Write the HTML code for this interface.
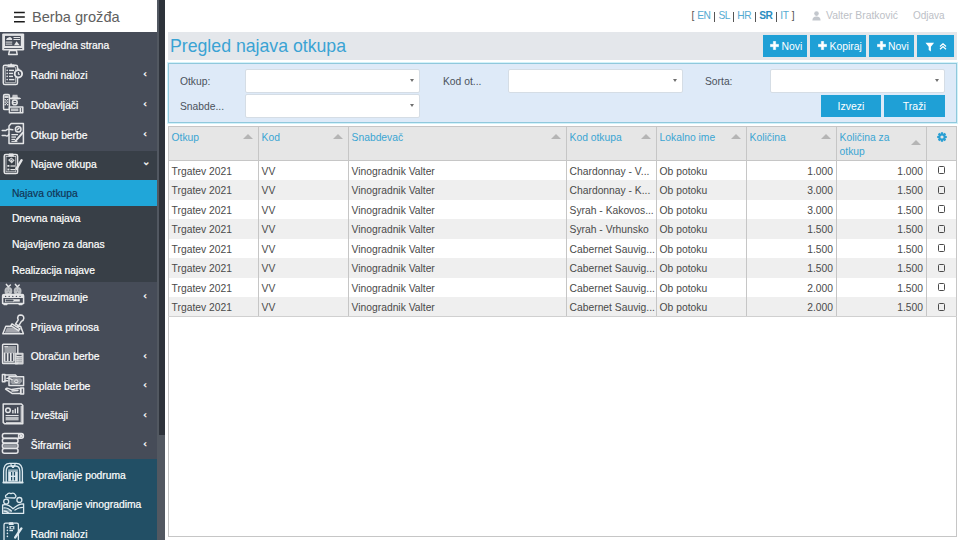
<!DOCTYPE html>
<html><head><meta charset="utf-8">
<style>
*{box-sizing:border-box;margin:0;padding:0}
html,body{width:960px;height:540px;overflow:hidden;background:#fff;font-family:"Liberation Sans",sans-serif;}
.abs{position:absolute}
#side{position:absolute;left:0;top:0;width:159px;height:540px;background:#464c58;}
#brand{position:absolute;left:0;top:0;width:157px;height:32px;background:#fff;}
#brand .t{position:absolute;left:32px;top:8.5px;font-size:14.6px;color:#606060;white-space:nowrap}
.hb{position:absolute;left:14px;width:11px;height:1.6px;background:#1a1a1a}
.mi{position:absolute;left:0;width:158px;color:#fff;-webkit-text-stroke:0.2px #fff;font-size:10.3px;white-space:nowrap}
.mi .tx{position:absolute;left:30.8px}
.mi .ch{position:absolute;left:143.5px;top:-1.6px;font-size:9.5px;color:#fff;-webkit-text-stroke:0.35px #fff}
.si{position:absolute;left:0;width:158px;color:#fff;-webkit-text-stroke:0.2px #fff;font-size:10.3px;white-space:nowrap}
.si .tx{position:absolute;left:11.9px}
#sb{position:absolute;left:157px;top:0;width:8px;height:540px;background:#525861}
#sbt{position:absolute;left:159px;top:0;width:5.8px;height:435px;background:#2e333b}
/* top bar */
#lang{position:absolute;left:691px;top:9.5px;font-size:9.8px;color:#555;white-space:nowrap}
#lang a{color:#3fa3cf;text-decoration:none}
#lang b{color:#1f8fc3}
#user{position:absolute;left:826px;top:9.8px;font-size:10.4px;color:#bcc0c6;white-space:nowrap}
#logout{position:absolute;left:913px;top:9.8px;font-size:10px;color:#bcc0c6;white-space:nowrap}
#titlebar{position:absolute;left:168px;top:32px;width:789px;height:28px;background:#e4e7eb}
#title{position:absolute;left:170px;top:36px;font-size:17.7px;color:#3aa3d4;white-space:nowrap}
.btn{position:absolute;top:35px;height:22px;background:#1fa0d6;color:#fff;font-size:10.5px;white-space:nowrap;text-align:center;line-height:22px}
#filter{position:absolute;left:168px;top:63px;width:789px;height:60px;background:#deeaf8;border:1px solid #90c8dc;box-shadow:0 0 0 1px #d2f2fa}
.lbl{position:absolute;font-size:10.3px;color:#4b525c;white-space:nowrap}
.inp{position:absolute;height:23px;background:#fff;border:1px solid #d5dde5;border-radius:2px}
.inp i{position:absolute;right:5px;top:9px;width:0;height:0;border-left:2.5px solid transparent;border-right:2.5px solid transparent;border-top:3.5px solid #707070}
.fbtn{position:absolute;top:95px;height:22px;background:#1fa0d6;color:#fff;font-size:10.5px;text-align:center;line-height:22px}
/* table */
#grid{position:absolute;left:168px;top:126px;width:789px;height:411px;border:1px solid #c6c6c6;background:#fff}
table{position:absolute;left:168px;top:126px;border-collapse:collapse;table-layout:fixed;font-size:10.3px;color:#333}
th{background:#e6e6e6;height:34px;vertical-align:top;text-align:left;font-weight:normal;color:#3aa5d3;padding:3px 3px 0 3px;border:1px solid #c6c6c6;position:relative;line-height:13px}
td{height:19.5px;padding:0 3px;border-left:1px solid #c6c6c6;border-right:1px solid #c6c6c6;white-space:nowrap;overflow:hidden;line-height:19px}
tr.alt td{background:#efefef}
td.r{text-align:right}
.arr{position:absolute;right:7px;top:7px;width:0;height:0;border-left:5px solid transparent;border-right:5px solid transparent;border-bottom:5px solid #b5b5b5}

.hd{position:absolute;font-size:10.3px;color:#3aa5d3;white-space:nowrap;line-height:14px}
.arr{position:absolute;width:0;height:0;border-left:5px solid transparent;border-right:5px solid transparent;border-bottom:5px solid #b5b5b5}
.cell{position:absolute;font-size:10.3px;color:#4a4a4a;white-space:nowrap;height:19.5px;line-height:21.5px}
.cell.r{text-align:right}
.tab{position:absolute;width:7px;height:8px;border:1px solid #4a4a4a;border-bottom-width:1.8px;border-radius:1.5px}
.btxt{position:absolute;top:40.3px;font-size:10.4px;color:#fff;white-space:nowrap;line-height:13px}
.lg{position:absolute;top:10.4px;font-size:10.2px;line-height:12px;white-space:nowrap}
.lg.a{color:#55abd2;letter-spacing:-0.5px}
.lg.b{color:#2a8dc0;font-weight:bold;letter-spacing:-0.6px}
.lg.p{background:#555;width:1.1px;height:10px;top:11.5px}
.lg.br{color:#555}
</style></head><body>
<div id="side">
  <div id="brand">
    <svg class="abs" style="left:0;top:0" width="30" height="30" viewBox="0 0 30 30"><path d="M14 12.6h10.8M14 17.1h10.8M14 21.7h10.8" stroke="#1a1a1a" stroke-width="1.5"/></svg>
    <div class="t">Berba grožđa</div>
  </div>
<div class="abs" style="left:0;top:151px;width:158px;height:131.4px;background:#383f47"></div>
<div class="abs" style="left:0;top:179.6px;width:158px;height:26.2px;background:#20a6d9"></div>
<div class="abs" style="left:0;top:459.4px;width:158px;height:81px;background:#224f65"></div>
<div class="mi" style="top:31.3px;height:29.75px;line-height:29.75px"><span class="ic"></span><span class="tx">Pregledna strana</span></div>
<div class="mi" style="top:60.9px;height:29.75px;line-height:29.75px"><span class="ic"></span><span class="tx">Radni nalozi</span><span class="ch">‹</span></div>
<div class="mi" style="top:90.5px;height:29.75px;line-height:29.75px"><span class="ic"></span><span class="tx">Dobavljači</span><span class="ch">‹</span></div>
<div class="mi" style="top:120.5px;height:29.75px;line-height:29.75px"><span class="ic"></span><span class="tx">Otkup berbe</span><span class="ch">‹</span></div>
<div class="mi" style="top:151px;height:28.6px;line-height:28.6px"><span class="ic"></span><span class="tx">Najave otkupa</span><span class="ch" style="left:141.8px;top:-2.6px">⌄</span></div>
<div class="si" style="top:179.6px;height:25.7px;line-height:28px"><span class="tx" style="color:#123556;-webkit-text-stroke:0.2px #123556">Najava otkupa</span></div>
<div class="si" style="top:205.29999999999998px;height:25.7px;line-height:28px"><span class="tx">Dnevna najava</span></div>
<div class="si" style="top:231.0px;height:25.7px;line-height:28px"><span class="tx">Najavljeno za danas</span></div>
<div class="si" style="top:256.7px;height:25.7px;line-height:28px"><span class="tx">Realizacija najave</span></div>
<div class="mi" style="top:283.0px;height:29.6px;line-height:29.6px"><span class="ic"></span><span class="tx">Preuzimanje</span><span class="ch">‹</span></div>
<div class="mi" style="top:312.6px;height:29.6px;line-height:29.6px"><span class="ic"></span><span class="tx">Prijava prinosa</span></div>
<div class="mi" style="top:342.2px;height:29.6px;line-height:29.6px"><span class="ic"></span><span class="tx">Obračun berbe</span><span class="ch">‹</span></div>
<div class="mi" style="top:371.8px;height:29.6px;line-height:29.6px"><span class="ic"></span><span class="tx">Isplate berbe</span><span class="ch">‹</span></div>
<div class="mi" style="top:401.4px;height:29.6px;line-height:29.6px"><span class="ic"></span><span class="tx">Izveštaji</span><span class="ch">‹</span></div>
<div class="mi" style="top:431.0px;height:29.6px;line-height:29.6px"><span class="ic"></span><span class="tx">Šifrarnici</span><span class="ch">‹</span></div>
<div class="mi" style="top:460.6px;height:29.6px;line-height:29.6px"><span class="ic"></span><span class="tx">Upravljanje podruma</span></div>
<div class="mi" style="top:490.35px;height:29.6px;line-height:29.6px"><span class="ic"></span><span class="tx">Upravljanje vinogradima</span></div>
<div class="mi" style="top:520.1px;height:29.6px;line-height:29.6px"><span class="ic"></span><span class="tx">Radni nalozi</span></div>
</div>
<div id="sb"></div><div id="sbt"></div>

<span class="lg br" style="left:691.5px">[</span><span class="lg a" style="left:697.3px">EN</span><span class="lg p" style="left:714.4000000000001px"></span><span class="lg a" style="left:718.4px">SL</span><span class="lg p" style="left:733.0px"></span><span class="lg a" style="left:737.3px">HR</span><span class="lg p" style="left:754.9000000000001px"></span><span class="lg b" style="left:759.3px">SR</span><span class="lg p" style="left:776.2px"></span><span class="lg a" style="left:780.3px">IT</span><span class="lg br" style="left:791.8px">]</span>
<svg class="abs" style="left:812px;top:11px" width="9" height="10" viewBox="0 0 9 10"><circle cx="4.5" cy="2.6" r="2.3" fill="#c3c7cd"/><path d="M0.4 9.6 Q0.4 5.4 4.5 5.4 Q8.6 5.4 8.6 9.6 Z" fill="#c3c7cd"/></svg>
<div id="user">Valter Bratković</div>
<div id="logout">Odjava</div>

<div id="titlebar"></div>
<div id="title">Pregled najava otkupa</div>
<div class="btn" style="left:763px;width:44px"></div>
<div class="btn" style="left:810px;width:56px"></div>
<div class="btn" style="left:869px;width:45px"></div>
<div class="btn" style="left:917px;width:37px"></div>
<svg class="abs" style="left:770px;top:40.5px" width="9" height="9" viewBox="0 0 9 9"><path d="M3.3 0.3h2.4v3h3v2.4h-3v3h-2.4v-3h-3v-2.4h3z" fill="#fff" stroke="#fff" stroke-width="0.4" stroke-linejoin="round"/></svg><div class="btxt" style="left:781.5px">Novi</div>
<svg class="abs" style="left:818px;top:40.5px" width="9" height="9" viewBox="0 0 9 9"><path d="M3.3 0.3h2.4v3h3v2.4h-3v3h-2.4v-3h-3v-2.4h3z" fill="#fff" stroke="#fff" stroke-width="0.4" stroke-linejoin="round"/></svg><div class="btxt" style="left:829.5px">Kopiraj</div>
<svg class="abs" style="left:876.5px;top:40.5px" width="9" height="9" viewBox="0 0 9 9"><path d="M3.3 0.3h2.4v3h3v2.4h-3v3h-2.4v-3h-3v-2.4h3z" fill="#fff" stroke="#fff" stroke-width="0.4" stroke-linejoin="round"/></svg><div class="btxt" style="left:888px">Novi</div>
<svg class="abs" style="left:924.5px;top:41.5px" width="10" height="10" viewBox="0 0 10 10"><path d="M0.5 0.8h8.6l-3.2 4v4.6l-2.2-1.4v-3.2z" fill="#fff"/></svg>
<svg class="abs" style="left:939px;top:42.5px" width="8" height="7" viewBox="0 0 8 7"><path d="M1 3.4l3-2.6l3 2.6M1 6.2l3-2.6l3 2.6" fill="none" stroke="#fff" stroke-width="1.3"/></svg>

<div id="filter"></div>
<div class="lbl" style="left:180px;top:75.8px">Otkup:</div>
<div class="lbl" style="left:180px;top:101px">Snabde...</div>
<div class="lbl" style="left:443px;top:75.8px">Kod ot...</div>
<div class="lbl" style="left:705px;top:75.8px">Sorta:</div>
<div class="inp" style="left:245px;top:69px;width:175px;height:24px"><i></i></div>
<div class="inp" style="left:245px;top:94px;width:175px;height:24px"><i></i></div>
<div class="inp" style="left:508px;top:69px;width:175px;height:24px"><i></i></div>
<div class="inp" style="left:770px;top:69px;width:175px;height:24px"><i></i></div>
<div class="fbtn" style="left:821px;width:60px">Izvezi</div>
<div class="fbtn" style="left:884px;width:60.5px">Traži</div>

<div id="grid"></div>
<div class="abs" style="left:169px;top:127px;width:787px;height:33px;background:#e6e6e6"></div>
<div class="abs" style="left:168px;top:160px;width:789px;height:1px;background:#c6c6c6"></div>
<div class="abs" style="left:169px;top:180.0px;width:787px;height:19.5px;background:#efefef"></div>
<div class="abs" style="left:169px;top:219.0px;width:787px;height:19.5px;background:#efefef"></div>
<div class="abs" style="left:169px;top:258.0px;width:787px;height:19.5px;background:#efefef"></div>
<div class="abs" style="left:169px;top:297.0px;width:787px;height:19.5px;background:#efefef"></div>
<div class="abs" style="left:168px;top:316px;width:789px;height:1px;background:#d0d0d0"></div>
<div class="abs" style="left:258.0px;top:126px;width:1px;height:190px;background:#c6c6c6"></div>
<div class="abs" style="left:348.0px;top:126px;width:1px;height:190px;background:#c6c6c6"></div>
<div class="abs" style="left:566.0px;top:126px;width:1px;height:190px;background:#c6c6c6"></div>
<div class="abs" style="left:656.0px;top:126px;width:1px;height:190px;background:#c6c6c6"></div>
<div class="abs" style="left:746.0px;top:126px;width:1px;height:190px;background:#c6c6c6"></div>
<div class="abs" style="left:836.0px;top:126px;width:1px;height:190px;background:#c6c6c6"></div>
<div class="abs" style="left:926.0px;top:126px;width:1px;height:190px;background:#c6c6c6"></div>
<div class="hd" style="left:171.6px;top:131px">Otkup</div>
<div class="arr" style="left:242.5px;top:134px"></div>
<div class="hd" style="left:261.6px;top:131px">Kod</div>
<div class="arr" style="left:332.5px;top:134px"></div>
<div class="hd" style="left:351.6px;top:131px">Snabdevač</div>
<div class="arr" style="left:550.5px;top:134px"></div>
<div class="hd" style="left:569.6px;top:131px">Kod otkupa</div>
<div class="arr" style="left:640.5px;top:134px"></div>
<div class="hd" style="left:659.6px;top:131px">Lokalno ime</div>
<div class="arr" style="left:730.5px;top:134px"></div>
<div class="hd" style="left:749.6px;top:131px">Količina</div>
<div class="arr" style="left:820.5px;top:134px"></div>
<div class="hd" style="left:839.6px;top:131px">Količina za<br>otkup</div>
<div class="arr" style="left:910.5px;top:140px"></div>
<div class="cell" style="left:171.6px;top:160.5px">Trgatev 2021</div>
<div class="cell" style="left:261.6px;top:160.5px">VV</div>
<div class="cell" style="left:351.6px;top:160.5px">Vinogradnik Valter</div>
<div class="cell" style="left:569.6px;top:160.5px">Chardonnay - V...</div>
<div class="cell" style="left:659.6px;top:160.5px">Ob potoku</div>
<div class="cell r" style="left:746.5px;width:86.5px;top:160.5px">1.000</div>
<div class="cell r" style="left:836.5px;width:86.5px;top:160.5px">1.000</div>
<div class="tab" style="left:938px;top:166.0px"></div>
<div class="cell" style="left:171.6px;top:180.0px">Trgatev 2021</div>
<div class="cell" style="left:261.6px;top:180.0px">VV</div>
<div class="cell" style="left:351.6px;top:180.0px">Vinogradnik Valter</div>
<div class="cell" style="left:569.6px;top:180.0px">Chardonnay - K...</div>
<div class="cell" style="left:659.6px;top:180.0px">Ob potoku</div>
<div class="cell r" style="left:746.5px;width:86.5px;top:180.0px">3.000</div>
<div class="cell r" style="left:836.5px;width:86.5px;top:180.0px">1.500</div>
<div class="tab" style="left:938px;top:185.5px"></div>
<div class="cell" style="left:171.6px;top:199.5px">Trgatev 2021</div>
<div class="cell" style="left:261.6px;top:199.5px">VV</div>
<div class="cell" style="left:351.6px;top:199.5px">Vinogradnik Valter</div>
<div class="cell" style="left:569.6px;top:199.5px">Syrah - Kakovos...</div>
<div class="cell" style="left:659.6px;top:199.5px">Ob potoku</div>
<div class="cell r" style="left:746.5px;width:86.5px;top:199.5px">3.000</div>
<div class="cell r" style="left:836.5px;width:86.5px;top:199.5px">1.500</div>
<div class="tab" style="left:938px;top:205.0px"></div>
<div class="cell" style="left:171.6px;top:219.0px">Trgatev 2021</div>
<div class="cell" style="left:261.6px;top:219.0px">VV</div>
<div class="cell" style="left:351.6px;top:219.0px">Vinogradnik Valter</div>
<div class="cell" style="left:569.6px;top:219.0px">Syrah - Vrhunsko</div>
<div class="cell" style="left:659.6px;top:219.0px">Ob potoku</div>
<div class="cell r" style="left:746.5px;width:86.5px;top:219.0px">1.500</div>
<div class="cell r" style="left:836.5px;width:86.5px;top:219.0px">1.500</div>
<div class="tab" style="left:938px;top:224.5px"></div>
<div class="cell" style="left:171.6px;top:238.5px">Trgatev 2021</div>
<div class="cell" style="left:261.6px;top:238.5px">VV</div>
<div class="cell" style="left:351.6px;top:238.5px">Vinogradnik Valter</div>
<div class="cell" style="left:569.6px;top:238.5px">Cabernet Sauvig...</div>
<div class="cell" style="left:659.6px;top:238.5px">Ob potoku</div>
<div class="cell r" style="left:746.5px;width:86.5px;top:238.5px">1.500</div>
<div class="cell r" style="left:836.5px;width:86.5px;top:238.5px">1.500</div>
<div class="tab" style="left:938px;top:244.0px"></div>
<div class="cell" style="left:171.6px;top:258.0px">Trgatev 2021</div>
<div class="cell" style="left:261.6px;top:258.0px">VV</div>
<div class="cell" style="left:351.6px;top:258.0px">Vinogradnik Valter</div>
<div class="cell" style="left:569.6px;top:258.0px">Cabernet Sauvig...</div>
<div class="cell" style="left:659.6px;top:258.0px">Ob potoku</div>
<div class="cell r" style="left:746.5px;width:86.5px;top:258.0px">1.500</div>
<div class="cell r" style="left:836.5px;width:86.5px;top:258.0px">1.500</div>
<div class="tab" style="left:938px;top:263.5px"></div>
<div class="cell" style="left:171.6px;top:277.5px">Trgatev 2021</div>
<div class="cell" style="left:261.6px;top:277.5px">VV</div>
<div class="cell" style="left:351.6px;top:277.5px">Vinogradnik Valter</div>
<div class="cell" style="left:569.6px;top:277.5px">Cabernet Sauvig...</div>
<div class="cell" style="left:659.6px;top:277.5px">Ob potoku</div>
<div class="cell r" style="left:746.5px;width:86.5px;top:277.5px">2.000</div>
<div class="cell r" style="left:836.5px;width:86.5px;top:277.5px">1.500</div>
<div class="tab" style="left:938px;top:283.0px"></div>
<div class="cell" style="left:171.6px;top:297.0px">Trgatev 2021</div>
<div class="cell" style="left:261.6px;top:297.0px">VV</div>
<div class="cell" style="left:351.6px;top:297.0px">Vinogradnik Valter</div>
<div class="cell" style="left:569.6px;top:297.0px">Cabernet Sauvig...</div>
<div class="cell" style="left:659.6px;top:297.0px">Ob potoku</div>
<div class="cell r" style="left:746.5px;width:86.5px;top:297.0px">2.000</div>
<div class="cell r" style="left:836.5px;width:86.5px;top:297.0px">1.500</div>
<div class="tab" style="left:938px;top:302.5px"></div>
<svg class="abs" style="left:936.5px;top:132px" width="10" height="10" viewBox="0 0 10 10"><path fill-rule="evenodd" d="M8.37 3.73 L9.78 3.93 L9.78 6.07 L8.37 6.27 L8.28 6.49 L9.14 7.63 L7.63 9.14 L6.49 8.28 L6.27 8.37 L6.07 9.78 L3.93 9.78 L3.73 8.37 L3.51 8.28 L2.37 9.14 L0.86 7.63 L1.72 6.49 L1.63 6.27 L0.22 6.07 L0.22 3.93 L1.63 3.73 L1.72 3.51 L0.86 2.37 L2.37 0.86 L3.51 1.72 L3.73 1.63 L3.93 0.22 L6.07 0.22 L6.27 1.63 L6.49 1.72 L7.63 0.86 L9.14 2.37 L8.28 3.51 Z M5 3.4 A1.6 1.6 0 1 0 5 6.6 A1.6 1.6 0 1 0 5 3.4 Z" fill="#2a9fd3"/></svg>
<svg class="abs" style="left:0;top:32px" width="28" height="30" viewBox="0 0 28 30">
<rect x="2.2" y="1.4" width="22" height="17" rx="1.2" fill="#e4e5e7"/>
<rect x="5" y="3.9" width="15.8" height="10" fill="#464c58"/>
<rect x="4.2" y="16" width="18" height="0.9" fill="#464c58"/>
<path d="M9.5 18.6 L16.5 18.6 L17.2 22.6 L8.6 22.6 Z" fill="none" stroke="#e4e5e7" stroke-width="1.5" stroke-linejoin="round" stroke-linecap="round"/>
<path d="M6 8 q0.5-2.5 2.5-2.5 q1.5 -1 3 0.5 q1.2 1 0.5 2 Z" fill="#e4e5e7"/>
<rect x="5.6" y="9.6" width="6.6" height="1" fill="#e4e5e7"/>
<rect x="5.6" y="11.6" width="6.6" height="1" fill="#e4e5e7"/>
<rect x="13.5" y="5" width="6.5" height="1" fill="#e4e5e7"/>
<rect x="13.5" y="7" width="6.5" height="1" fill="#e4e5e7"/>
<path d="M14 13.2 L16.5 9.3 L19.8 13.2 Z" fill="#e4e5e7"/>
</svg>
<svg class="abs" style="left:0;top:60px" width="28" height="30" viewBox="0 0 28 30">
<rect x="3.3" y="5.2" width="14.2" height="19.3" rx="1.6" fill="none" stroke="#e4e5e7" stroke-width="1.5" stroke-linejoin="round" stroke-linecap="round"/>
<rect x="5.2" y="7" width="10.4" height="15.7" rx="0.6" fill="none" stroke="#e4e5e7" stroke-width="0.7"/>
<path d="M7.4 7 L8 4.4 L10 4.4 L10.5 3.4 L11.7 3.4 L12.2 4.4 L14.2 4.4 L14.8 7 Z" fill="#e4e5e7"/>
<g fill="#e4e5e7"><circle cx="7.2" cy="10.4" r="0.8"/><circle cx="7.2" cy="13.4" r="0.8"/><circle cx="7.2" cy="16.4" r="0.8"/><circle cx="7.2" cy="19.6" r="0.8"/>
<rect x="9" y="9.7" width="5" height="1.4"/><rect x="9" y="12.7" width="4" height="1.4"/><rect x="9" y="15.7" width="4" height="1.4"/><rect x="9" y="18.9" width="5.4" height="1.4"/></g>
<circle cx="18.4" cy="13.8" r="3.7" fill="#464c58" stroke="#e4e5e7" stroke-width="1.9"/>
<path d="M18.4 12 L18.4 14.2 L20 14.2" fill="none" stroke="#e4e5e7" stroke-width="1.1"/>
<rect x="17.5" y="8.4" width="1.8" height="1.6" fill="#e4e5e7"/>
</svg>
<svg class="abs" style="left:0;top:90px" width="28" height="30" viewBox="0 0 28 30">
<rect x="3.6" y="4.6" width="5.8" height="15" rx="1.2" fill="none" stroke="#e4e5e7" stroke-width="1.5" stroke-linejoin="round" stroke-linecap="round"/>
<g fill="#e4e5e7"><rect x="4.4" y="5.6" width="4.2" height="2.4" opacity="0.9"/><rect x="4.6" y="9" width="1.3" height="1.3"/><rect x="6.9" y="9" width="1.3" height="1.3"/><rect x="5.7" y="10.3" width="1.2" height="1.2"/><rect x="4.6" y="11.5" width="1.3" height="1.3"/><rect x="6.9" y="11.5" width="1.3" height="1.3"/><rect x="5.7" y="12.8" width="1.2" height="1.2"/><rect x="4.6" y="14" width="1.3" height="1.3"/><rect x="6.9" y="14" width="1.3" height="1.3"/></g>
<path d="M12 8 L12.6 4.8 L17.4 4.8 L18 8" fill="#e4e5e7" opacity="0.8"/>
<ellipse cx="15" cy="8.4" rx="6" ry="1.2" fill="#e4e5e7"/>
<circle cx="14.8" cy="12.4" r="2.4" fill="none" stroke="#e4e5e7" stroke-width="1.5" stroke-linejoin="round" stroke-linecap="round"/>
<path d="M13 12.6 L16.6 12.6" stroke="#e4e5e7" stroke-width="1"/>
<path d="M9.4 17 L22.8 17 L22.8 22.8 L9.4 22.8 Z" fill="none" stroke="#e4e5e7" stroke-width="1.5" stroke-linejoin="round" stroke-linecap="round"/>
<rect x="11" y="18.4" width="7.4" height="2.8" fill="#e4e5e7" opacity="0.75"/>
<rect x="19.6" y="18" width="1.6" height="4" fill="#e4e5e7"/>
</svg>
<svg class="abs" style="left:0;top:120px" width="28" height="30" viewBox="0 0 28 30">
<path d="M11.2 3.6 L23.4 3.6 L23.4 23.6 L9 23.6 L9 6 Z" fill="none" stroke="#e4e5e7" stroke-width="1.5" stroke-linejoin="round" stroke-linecap="round"/>
<circle cx="18.2" cy="9.2" r="2.8" fill="none" stroke="#e4e5e7" stroke-width="1.5" stroke-linejoin="round" stroke-linecap="round"/>
<path d="M17.2 9.8 L19 8.2" fill="none" stroke="#e4e5e7" stroke-width="1.5" stroke-linejoin="round" stroke-linecap="round" stroke-width="1.1"/>
<g fill="#e4e5e7"><rect x="11.4" y="14" width="6.6" height="1.3"/><rect x="11.4" y="16.4" width="4.6" height="1.3"/><rect x="11.4" y="18.8" width="3.6" height="1.3"/><rect x="11.4" y="21" width="6" height="0.9"/></g>
<path d="M22.6 12.8 L15.6 20.8" stroke="#e4e5e7" stroke-width="2" stroke-linecap="round"/>
<path d="M2.2 10.4 L5.8 10.4 Q7.5 8.6 12.8 9.8" fill="none" stroke="#e4e5e7" stroke-width="1.5" stroke-linejoin="round" stroke-linecap="round"/>
<path d="M2.2 15.6 L5.6 15.6 Q7.8 16.8 8.8 14.2" fill="none" stroke="#e4e5e7" stroke-width="1.5" stroke-linejoin="round" stroke-linecap="round"/>
</svg>
<svg class="abs" style="left:0;top:150px" width="28" height="30" viewBox="0 0 28 30">
<rect x="4.2" y="4.6" width="13.4" height="19" rx="1.6" fill="none" stroke="#e4e5e7" stroke-width="1.5" stroke-linejoin="round" stroke-linecap="round"/>
<rect x="6" y="6.4" width="9.8" height="15.4" fill="none" stroke="#e4e5e7" stroke-width="0.7"/>
<path d="M8.2 6.4 L9 3.4 L13.2 3.4 L14 6.4 Z" fill="#e4e5e7"/>
<path d="M8 10 L11.4 7.4 L14.6 10.2 L11.8 13.6 Z" fill="#e4e5e7" opacity="0.9"/>
<path d="M10 10.2 L11.6 9.2 L12.6 10.6" stroke="#464c58" stroke-width="0.8" fill="none"/>
<g fill="#e4e5e7"><rect x="7.4" y="15" width="2" height="1.8"/><rect x="7.4" y="18.6" width="2" height="1.8"/><rect x="10.4" y="15.4" width="4.6" height="1.2"/><rect x="10.4" y="19" width="4.6" height="1.2"/></g>
<path d="M21.6 10.2 L16.4 18.8" stroke="#e4e5e7" stroke-width="2.4" stroke-linecap="round"/>
</svg>
<svg class="abs" style="left:0;top:282px" width="28" height="30" viewBox="0 0 28 30">
<ellipse cx="8.4" cy="9" rx="3.9" ry="4" fill="#e4e5e7" opacity="0.75"/>
<ellipse cx="17.6" cy="9" rx="3.9" ry="4" fill="#e4e5e7" opacity="0.75"/>
<g fill="#464c58" opacity="0.5"><circle cx="7" cy="8" r="0.6"/><circle cx="9.6" cy="8" r="0.6"/><circle cx="8.3" cy="10.4" r="0.6"/><circle cx="16.2" cy="8" r="0.6"/><circle cx="18.8" cy="8" r="0.6"/><circle cx="17.5" cy="10.4" r="0.6"/></g>
<path d="M6.4 2.4 L8.4 4.8 L10.4 3 M15.4 2.4 L17.4 4.8 L19.2 3" fill="none" stroke="#e4e5e7" stroke-width="1.5" stroke-linejoin="round" stroke-linecap="round" stroke-width="1.1"/>
<path d="M2.6 13.8 Q2.6 12.4 4 12.4 L22.2 12.4 Q23.6 12.4 23.6 13.8 L23.6 21.4 L2.6 21.4 Z" fill="none" stroke="#e4e5e7" stroke-width="1.5" stroke-linejoin="round" stroke-linecap="round"/>
<rect x="3" y="12.6" width="20.4" height="3.4" fill="#e4e5e7"/>
<g fill="#464c58"><circle cx="5.6" cy="14.4" r="0.7"/><circle cx="9.2" cy="14.4" r="0.7"/><circle cx="12.8" cy="14.4" r="0.7"/><circle cx="16.4" cy="14.4" r="0.7"/><circle cx="20" cy="14.4" r="0.7"/></g>
<rect x="5.4" y="17.2" width="8.4" height="2.6" fill="#464c58" stroke="#e4e5e7" stroke-width="0.6"/>
<rect x="14" y="17.2" width="5.8" height="2.4" fill="#e4e5e7"/>
<path d="M4 22.4 L6.8 22.4 M19.2 22.4 L22 22.4" fill="none" stroke="#e4e5e7" stroke-width="1.5" stroke-linejoin="round" stroke-linecap="round" stroke-width="1.6"/>
</svg>
<svg class="abs" style="left:0;top:311px" width="28" height="30" viewBox="0 0 28 30">
<path d="M11 15.2 L5.8 15.2 L2.8 22.8 L23.4 22.8 L20.6 15.2 L17.6 15.2" fill="none" stroke="#e4e5e7" stroke-width="1.5" stroke-linejoin="round" stroke-linecap="round"/>
<path d="M4.8 21.8 L7 16.6 L12 16.6 L19 20 L20.6 21.8 Z" fill="#e4e5e7" opacity="0.6"/>
<path d="M20.6 4 Q24 4.2 23.8 7.4 Q23.6 9.6 21.4 10.4 L18.6 14.8 L15.6 13 L18.2 8.8 Q17.2 6.6 18.2 5 Q19 4 20.6 4 Z" fill="none" stroke="#e4e5e7" stroke-width="1.5" stroke-linejoin="round" stroke-linecap="round"/>
<path d="M12 12.8 L20 17.8 L18.6 19.6 L10.8 14.6 Z" fill="#464c58" fill="none" stroke="#e4e5e7" stroke-width="1.5" stroke-linejoin="round" stroke-linecap="round"/>
</svg>
<svg class="abs" style="left:0;top:341px" width="28" height="30" viewBox="0 0 28 30">
<rect x="2.6" y="3.3" width="15.2" height="19.2" rx="0.8" fill="none" stroke="#e4e5e7" stroke-width="1.5" stroke-linejoin="round" stroke-linecap="round"/>
<rect x="4.4" y="5" width="11.6" height="6" fill="#e4e5e7" opacity="0.55"/>
<rect x="4.4" y="5.2" width="3.6" height="1" fill="#e4e5e7"/>
<g fill="#e4e5e7"><rect x="3.8" y="12" width="1.6" height="8"/><rect x="6.9" y="12" width="1.6" height="8"/><rect x="10" y="12" width="1.6" height="8"/><rect x="13.1" y="12" width="1.4" height="8"/><rect x="3.8" y="20.2" width="10" height="1.2"/><rect x="3.8" y="11.4" width="12" height="0.8"/></g>
<rect x="14.6" y="11.8" width="9" height="11.6" rx="1" fill="#e4e5e7" opacity="0.9"/>
<rect x="16.6" y="13.8" width="5" height="1.1" fill="#464c58"/>
<g fill="#464c58" opacity="0.45"><rect x="16.2" y="16.4" width="5.8" height="0.8"/><rect x="16.2" y="18.4" width="5.8" height="0.8"/><rect x="16.2" y="20.4" width="5.8" height="0.8"/></g>
</svg>
<svg class="abs" style="left:0;top:370px" width="28" height="30" viewBox="0 0 28 30">
<rect x="2.4" y="4.4" width="2.6" height="7.4" fill="none" stroke="#e4e5e7" stroke-width="1.5" stroke-linejoin="round" stroke-linecap="round"/>
<path d="M5 5 L15.4 5 L16.8 6.6 M5 10.8 L7.6 10.8" fill="none" stroke="#e4e5e7" stroke-width="1.5" stroke-linejoin="round" stroke-linecap="round"/>
<rect x="9" y="6.8" width="14.6" height="8.8" fill="none" stroke="#e4e5e7" stroke-width="1.5" stroke-linejoin="round" stroke-linecap="round"/>
<path d="M10.4 8.2 L22.2 8.2 L22.2 14.2 L10.4 14.2 Z" fill="#e4e5e7" opacity="0.55"/>
<path d="M10.4 8.2 L13 8.2 L10.4 11 Z M22.2 14.2 L19.6 14.2 L22.2 11.4 Z M22.2 8.2 L20.4 8.2 L22.2 10 Z M10.4 14.2 L12.2 14.2 L10.4 12.4 Z" fill="#464c58"/>
<circle cx="16.3" cy="11.2" r="2" fill="#e4e5e7"/>
<path d="M15.2 11.2 L17.4 11.2" stroke="#464c58" stroke-width="0.8"/>
<path d="M7 8.4 Q9 7.6 12 9.6" fill="none" stroke="#e4e5e7" stroke-width="1.5" stroke-linejoin="round" stroke-linecap="round" stroke-width="1.2"/>
<path d="M5.6 19.2 Q6.4 18 8 18.4 L11.6 19.6 L18.6 18.6 L20.6 18.6 L20.6 23.4 L12.4 23.6 Z" fill="none" stroke="#e4e5e7" stroke-width="1.5" stroke-linejoin="round" stroke-linecap="round"/>
<path d="M12 21 L18 20.4" fill="none" stroke="#e4e5e7" stroke-width="1.5" stroke-linejoin="round" stroke-linecap="round" stroke-width="1"/>
<rect x="20.8" y="18" width="2.8" height="6" fill="none" stroke="#e4e5e7" stroke-width="1.5" stroke-linejoin="round" stroke-linecap="round"/>
</svg>
<svg class="abs" style="left:0;top:400px" width="28" height="30" viewBox="0 0 28 30">
<path d="M3.2 4 L21.4 4 L22.8 5.6 L22.8 23.8 L4.6 23.8 L3.2 22.4 Z" fill="none" stroke="#e4e5e7" stroke-width="1.5" stroke-linejoin="round" stroke-linecap="round"/>
<path d="M20.6 6 L22.4 6 L22.4 23.4 L6 23.4 L6 22 L20.6 22 Z" fill="#e4e5e7" opacity="0.8"/>
<circle cx="8" cy="10.2" r="2.3" fill="none" stroke="#e4e5e7" stroke-width="1.5" stroke-linejoin="round" stroke-linecap="round"/>
<g fill="#e4e5e7"><rect x="12.2" y="10" width="1.4" height="3.4"/><rect x="14.6" y="8.6" width="1.4" height="4.8"/><rect x="17" y="7.2" width="1.4" height="6.2"/></g>
<rect x="5.6" y="15" width="13" height="1" fill="#e4e5e7"/>
<rect x="5.6" y="16.8" width="13" height="3.6" fill="#e4e5e7" opacity="0.75"/>
</svg>
<svg class="abs" style="left:0;top:429px" width="28" height="30" viewBox="0 0 28 30">
<rect x="2.4" y="4.4" width="21" height="4.8" rx="2" fill="none" stroke="#e4e5e7" stroke-width="1.5" stroke-linejoin="round" stroke-linecap="round"/>
<rect x="2.4" y="9.4" width="15.6" height="4.6" rx="2" fill="none" stroke="#e4e5e7" stroke-width="1.5" stroke-linejoin="round" stroke-linecap="round"/>
<rect x="2.4" y="14.4" width="15.6" height="4.8" rx="2" fill="none" stroke="#e4e5e7" stroke-width="1.5" stroke-linejoin="round" stroke-linecap="round"/>
<rect x="2.4" y="19.4" width="15.6" height="4.8" rx="2" fill="none" stroke="#e4e5e7" stroke-width="1.5" stroke-linejoin="round" stroke-linecap="round"/>
<rect x="3.4" y="15.6" width="13.4" height="2.4" fill="#e4e5e7" opacity="0.5"/>
<path d="M18.6 5.4 L18.6 8.4 M20 5.4 L22.4 8.2 M22.4 5.4 L20 8.2" fill="none" stroke="#e4e5e7" stroke-width="1.5" stroke-linejoin="round" stroke-linecap="round" stroke-width="0.9"/>
</svg>
<svg class="abs" style="left:0;top:459px" width="28" height="30" viewBox="0 0 28 30">
<path d="M3.6 22.8 L3.6 12.6 Q3.6 4.4 9.6 4.4 L16.4 4.4 Q22.4 4.4 22.4 12.6 L22.4 22.8" fill="none" stroke="#dde9ef" stroke-width="1.3" stroke-linejoin="round" stroke-linecap="round" stroke-width="1.6"/>
<path d="M6.2 22.4 L6.2 12.6 Q6.2 7 10.4 7 L15.6 7 Q19.8 7 19.8 12.6 L19.8 22.4" fill="none" stroke="#dde9ef" stroke-width="1.3" stroke-linejoin="round" stroke-linecap="round" stroke-width="1"/>
<rect x="8.2" y="10.6" width="9.6" height="11.8" fill="#dde9ef"/>
<g fill="#224f65"><rect x="11" y="13" width="1.3" height="3.6"/><rect x="13.8" y="13" width="1.3" height="3.6"/><rect x="11" y="18" width="1.3" height="3.4"/><rect x="13.8" y="18" width="1.3" height="3.4"/><rect x="8.2" y="11.6" width="9.6" height="0.7"/></g>
<path d="M11 5.6 L12.6 8.4 M15 5.6 L13.4 8.4" fill="none" stroke="#dde9ef" stroke-width="1.3" stroke-linejoin="round" stroke-linecap="round" stroke-width="1.1"/>
<rect x="2.4" y="22.4" width="21.2" height="2.2" rx="1" fill="#dde9ef"/>
</svg>
<svg class="abs" style="left:0;top:488px" width="28" height="30" viewBox="0 0 28 30">
<path d="M6 9.6 Q4.6 7.4 7 6.6 Q8.4 4.4 11 5.6 Q14 4.4 15.2 6.8 Q16.8 8.4 14.8 10 Z" fill="none" stroke="#dde9ef" stroke-width="1.3" stroke-linejoin="round" stroke-linecap="round"/>
<circle cx="6.2" cy="13.6" r="2.5" fill="none" stroke="#dde9ef" stroke-width="1.3" stroke-linejoin="round" stroke-linecap="round"/>
<circle cx="19.4" cy="12" r="2.5" fill="none" stroke="#dde9ef" stroke-width="1.3" stroke-linejoin="round" stroke-linecap="round"/>
<path d="M2.6 17 Q8 15.6 13 20.8 Q18 15.8 23.6 15.8 L23.6 25.4 L2.6 25.4 Z" fill="none" stroke="#dde9ef" stroke-width="1.3" stroke-linejoin="round" stroke-linecap="round"/>
<path d="M4 20 Q8 19.6 11.4 23 M15 22 Q18.6 19.4 22.4 19.4 M4 23 Q6.6 23 8.4 25" fill="none" stroke="#dde9ef" stroke-width="1.3" stroke-linejoin="round" stroke-linecap="round" stroke-width="0.9"/>
<rect x="3.4" y="21.6" width="8" height="3" fill="#dde9ef" opacity="0.4"/>
</svg>
<svg class="abs" style="left:0;top:515px" width="28" height="30" viewBox="0 0 28 30">
<rect x="4" y="8.2" width="14.4" height="20" rx="1.6" fill="none" stroke="#dde9ef" stroke-width="1.3" stroke-linejoin="round" stroke-linecap="round" stroke-width="1.6"/>
<path d="M8.6 10 L9.4 7.2 L13 7.2 L13.8 10 Z" fill="#dde9ef"/>
<g fill="#dde9ef"><circle cx="7.4" cy="12.4" r="0.8"/><circle cx="7.4" cy="15.4" r="0.8"/><circle cx="7.4" cy="18.4" r="0.8"/><circle cx="7.4" cy="21.4" r="0.8"/><rect x="9.4" y="11" width="5" height="3.4" opacity="0.85"/><rect x="9.4" y="15" width="3.6" height="1.2"/></g>
<rect x="11" y="12" width="2" height="1.4" fill="#224f65"/>
<path d="M21.4 13.4 L15.2 22.4" stroke="#dde9ef" stroke-width="2.4" stroke-linecap="round"/>
</svg>
</body></html>
